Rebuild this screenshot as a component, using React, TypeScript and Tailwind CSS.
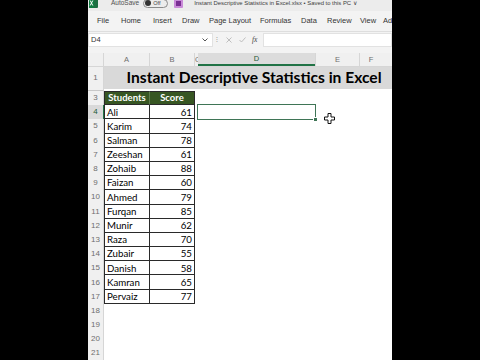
import React from 'react';

const students: [string, number][] = [
  ['Ali', 61],
  ['Karim', 74],
  ['Salman', 78],
  ['Zeeshan', 61],
  ['Zohaib', 88],
  ['Faizan', 60],
  ['Ahmed', 79],
  ['Furqan', 85],
  ['Munir', 62],
  ['Raza', 70],
  ['Zubair', 55],
  ['Danish', 58],
  ['Kamran', 65],
  ['Pervaiz', 77],
];

const tabs = [
  { label: 'File', w: 'w-[24px]' },
  { label: 'Home', w: 'w-[32px]' },
  { label: 'Insert', w: 'w-[29px]' },
  { label: 'Draw', w: 'w-[27px]' },
  { label: 'Page Layout', w: 'w-[51px]' },
  { label: 'Formulas', w: 'w-[41px]' },
  { label: 'Data', w: 'w-[26px]' },
  { label: 'Review', w: 'w-[33px]' },
  { label: 'View', w: 'w-[23px]' },
  { label: 'Ad', w: 'w-[20px]' },
];

const chrome = { fontFamily: '"Liberation Sans", Arial, sans-serif' };
const sheet = { fontFamily: 'Lato, "Open Sans", sans-serif' };

const RowHeader: React.FC<{ n: number; active?: boolean }> = ({ n, active }) => (
  <div
    className={`w-[16px] shrink-0 flex items-center justify-center text-[8px] border-r ${
      active ? 'bg-[#d9d9d9] text-[#1f5a36] border-[#217346]' : 'bg-[#f0f0f0] text-[#6e6e6e] border-[#d6d6d6]'
    }`}
    style={chrome}
  >
    {n}
  </div>
);

const App: React.FC = () => {
  return (
    <div className="w-[480px] h-[360px] bg-black flex justify-center overflow-hidden">
      <div className="relative w-[304px] h-full bg-white flex flex-col overflow-hidden" style={chrome}>
        {/* title bar, cut at the top */}
        <div className="h-[11px] bg-[#ececec] overflow-hidden shrink-0">
          <div className="flex items-center h-[14px] -mt-[4px] pl-[1px]">
            <svg width="9" height="10" viewBox="0 0 9 10">
              <rect x="0" y="0" width="9" height="10" rx="1" fill="#1d6f42" />
              <rect x="0" y="0" width="5" height="10" rx="1" fill="#107c41" />
              <path d="M1.2 2.5 L3.8 7.5 M3.8 2.5 L1.2 7.5" stroke="#fff" strokeWidth="1" />
            </svg>
            <span className="ml-[13px] text-[6.5px] text-[#505050]">AutoSave</span>
            <div className="ml-[4px] w-[25px] h-[9px] rounded-full border border-[#8a8a8a] flex items-center px-[1px] gap-[2px]">
              <div className="w-[6px] h-[6px] rounded-full bg-[#333]" />
              <span className="text-[5.5px] text-[#444]">Off</span>
            </div>
            <div className="ml-[6px] w-[9px] h-[10px] rounded-[1px] bg-[#c98ad8] flex items-center justify-center">
              <div className="w-[5px] h-[5px] bg-[#7a2f93]" />
            </div>
            <span className="ml-[11px] text-[5.9px] text-[#404040] whitespace-nowrap">
              Instant Descriptive Statistics in Excel.xlsx • Saved to this PC ∨
            </span>
          </div>
        </div>

        {/* ribbon tabs */}
        <div className="h-[21px] bg-[#f3f3f3] flex items-center pl-[9px] border-b border-[#dedede] shrink-0">
          {tabs.map(t => (
            <span key={t.label} className={`${t.w} shrink-0 text-[7.5px] text-[#333] whitespace-nowrap`}>
              {t.label}
            </span>
          ))}
        </div>

        {/* formula bar */}
        <div className="h-[21px] bg-[#f3f3f3] flex items-start pt-[1px] shrink-0">
          <div className="w-[125px] h-[14px] bg-white border border-[#e2e2e2] flex items-center justify-between pl-[2px] pr-[4px]">
            <span className="text-[7.5px] text-[#333]">D4</span>
            <svg width="6" height="4" viewBox="0 0 6 4">
              <path d="M0.5 0.5 L3 3 L5.5 0.5" fill="none" stroke="#555" strokeWidth="1" />
            </svg>
          </div>
          <div className="w-[50px] h-[14px] flex items-center">
            <span className="ml-[3px] text-[7px] text-[#888]">⁝</span>
            <svg className="ml-[8px]" width="6" height="6" viewBox="0 0 6 6">
              <path d="M0.5 0.5 L5.5 5.5 M5.5 0.5 L0.5 5.5" stroke="#b8b8b8" strokeWidth="0.9" />
            </svg>
            <svg className="ml-[7px]" width="7" height="6" viewBox="0 0 7 6">
              <path d="M0.5 3 L2.5 5 L6.5 0.5" fill="none" stroke="#b8b8b8" strokeWidth="0.9" />
            </svg>
            <span className="ml-[6px] text-[7.5px] italic text-[#444]" style={{ fontFamily: '"Liberation Serif", serif' }}>
              fx
            </span>
          </div>
          <div className="flex-1 h-[14px] bg-white border border-[#e2e2e2]" />
        </div>

        {/* column headers */}
        <div className="h-[14px] flex bg-[#f0f0f0] text-[7.5px] text-[#6e6e6e] shrink-0 border-b border-[#d6d6d6]">
          <div className="w-[16px] shrink-0 border-r border-[#d6d6d6]" />
          <div className="w-[46px] shrink-0 flex items-center justify-center border-r border-[#d6d6d6]">A</div>
          <div className="w-[45px] shrink-0 flex items-center justify-center border-r border-[#d6d6d6]">B</div>
          <div className="w-[3px] shrink-0 flex items-center overflow-hidden">C</div>
          <div className="w-[117px] shrink-0 flex items-center justify-center bg-[#dcdcdc] text-[#1f5a36] border-b-2 border-[#217346]">
            D
          </div>
          <div className="w-[45px] shrink-0 flex items-center justify-center border-l border-r border-[#d6d6d6]">E</div>
          <div className="flex-1 flex items-center justify-center pr-[10px]">F</div>
        </div>

        {/* row 1: title */}
        <div className="h-[22px] flex shrink-0">
          <RowHeader n={1} />
          <div
            className="flex-1 bg-[#d9d9d9] flex items-center justify-center pl-[12px] text-[15.6px] font-bold text-black whitespace-nowrap"
            style={sheet}
          >
            Instant Descriptive Statistics in Excel
          </div>
        </div>

        {/* row 2 is hidden */}
        <div className="h-[2px] flex shrink-0">
          <div className="w-[16px] bg-[#f0f0f0] border-b border-[#c8c8c8] border-r border-r-[#d6d6d6]" />
        </div>

        {/* row 3: table header */}
        <div className="h-[14.2px] flex shrink-0" style={sheet}>
          <RowHeader n={3} />
          <div className="w-[46px] shrink-0 bg-[#375623] text-white font-bold text-[9.5px] flex items-center justify-center border border-[#2a2a2a] border-r-[#5d7a4c]">
            Students
          </div>
          <div className="w-[45px] shrink-0 bg-[#375623] text-white font-bold text-[9.5px] flex items-center justify-center border-y border-r border-[#2a2a2a]">
            Score
          </div>
        </div>

        {students.map(([name, score], i) => (
          <div key={name} className="h-[14.2px] flex shrink-0" style={sheet}>
            <RowHeader n={i + 4} active={i === 0} />
            <div className="w-[46px] shrink-0 flex items-center pl-[2px] text-[9.7px] text-black border-x border-b border-[#2a2a2a]">
              {name}
            </div>
            <div className="w-[45px] shrink-0 flex items-center justify-end pr-[2px] text-[9.7px] text-black border-r border-b border-[#2a2a2a]">
              {score}
            </div>
            <div className="w-[3px] shrink-0" />
            <div className="w-[117px] shrink-0 relative">
              {i === 0 && (
                <div className="absolute -inset-[1px] border-[1.5px] border-[#3f7556]">
                  <div className="absolute -right-[3px] -bottom-[3px] w-[5px] h-[5px] bg-[#3f7556] border border-white" />
                </div>
              )}
            </div>
          </div>
        ))}

        {[18, 19, 20, 21].map(n => (
          <div key={n} className="h-[14.2px] flex shrink-0">
            <RowHeader n={n} />
          </div>
        ))}
        <div className="flex-1 flex">
          <div className="w-[16px] bg-[#f0f0f0] border-r border-[#d6d6d6]" />
        </div>

        {/* cell cursor */}
        <svg className="absolute left-[236px] top-[113px]" width="11" height="11" viewBox="0 0 11 11">
          <path
            d="M4 0.5 H7 V4 H10.5 V7 H7 V10.5 H4 V7 H0.5 V4 H4 Z"
            fill="#fff"
            stroke="#111"
            strokeWidth="1"
          />
        </svg>
      </div>
    </div>
  );
};

export default App;
